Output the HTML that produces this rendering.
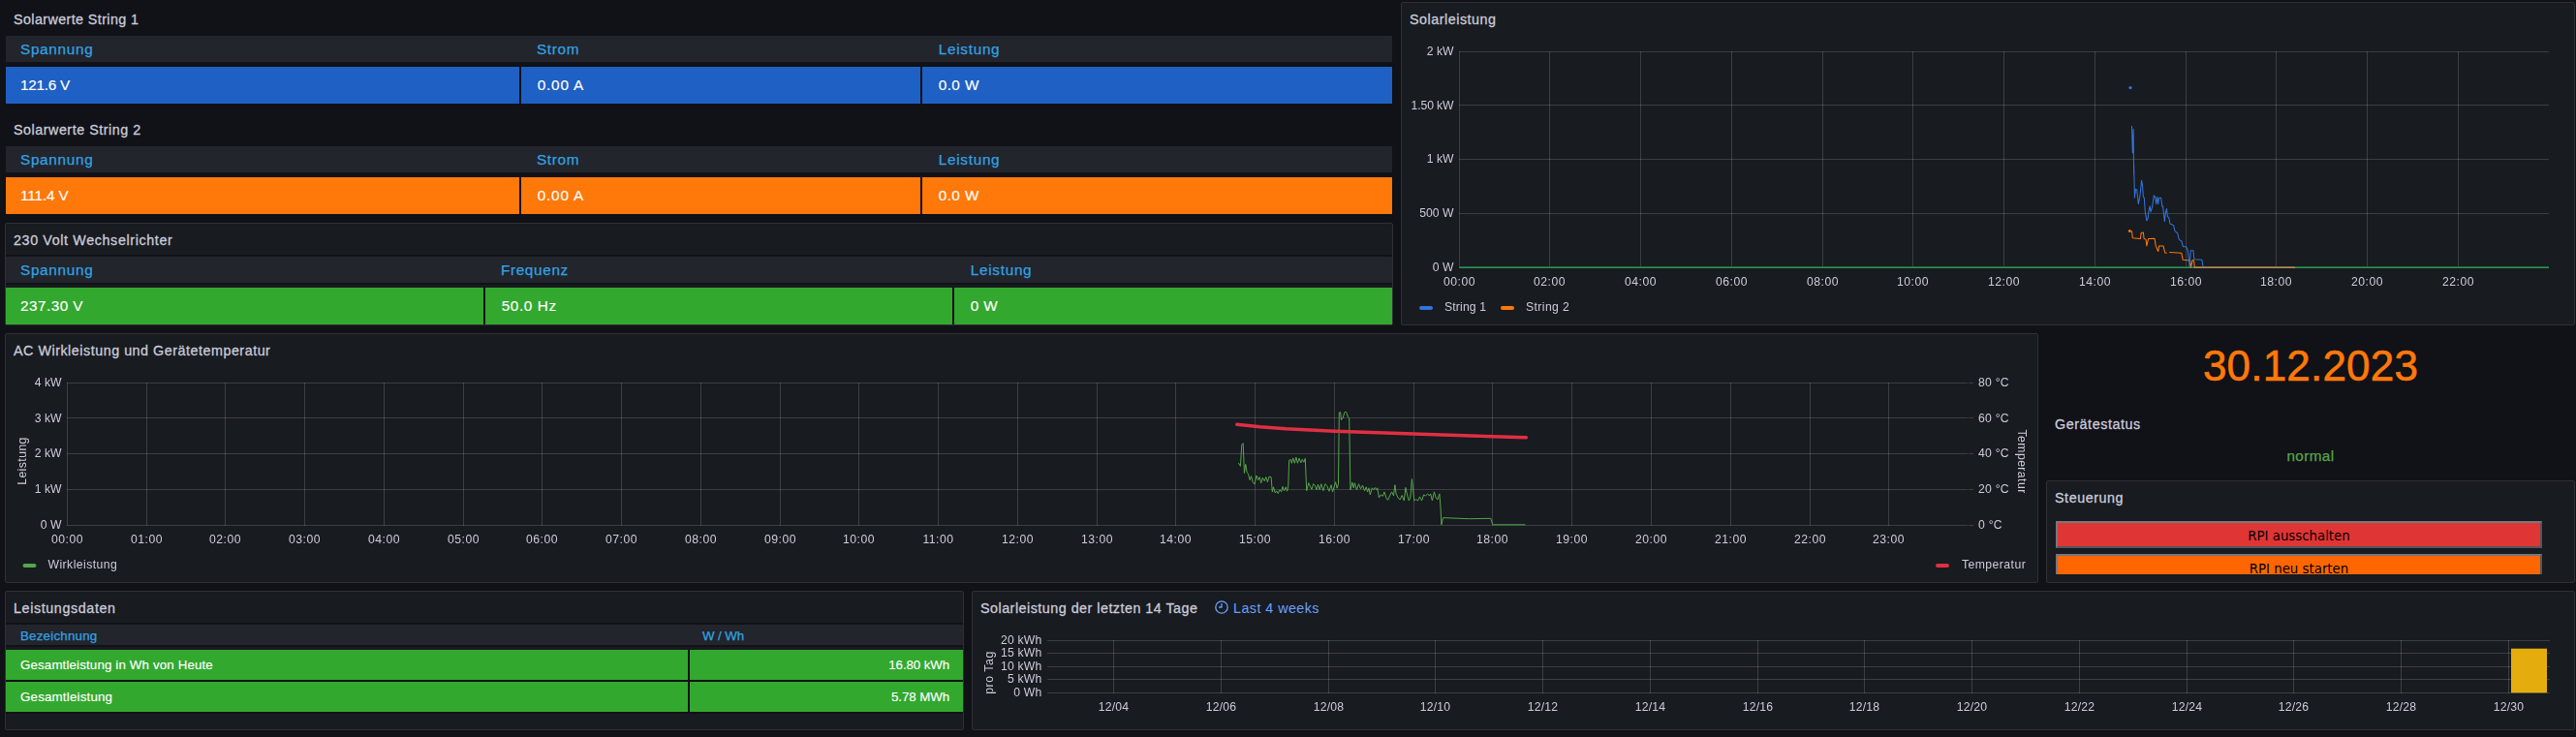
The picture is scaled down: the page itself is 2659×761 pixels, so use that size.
<!DOCTYPE html><html lang="de"><head><meta charset="utf-8"><title>Solar Dashboard</title><style>
html,body{margin:0;padding:0;}
body{width:2659px;height:761px;background:#111217;position:relative;overflow:hidden;
 font-family:"Liberation Sans",sans-serif;color:#ccccdc;font-size:14px;}
.panel{position:absolute;box-sizing:border-box;border:1px solid #2e3036;background:#181b1f;border-radius:2px;}
.panel.tr{border-color:transparent;background:transparent;}
.title{position:absolute;left:8px;top:8px;height:18px;line-height:18px;font-size:14.3px;white-space:nowrap;
 color:#ccccdc;-webkit-text-stroke:.28px #ccccdc;}
.th{position:absolute;box-sizing:border-box;background:#22252b;box-shadow:0 -2px 0 #111217,0 2px 0 #111217;color:#33a2e5;white-space:nowrap;-webkit-text-stroke:.25px #33a2e5;}
.th span,.td span{position:absolute;white-space:nowrap;}
.td{position:absolute;box-sizing:border-box;color:#fff;white-space:nowrap;-webkit-text-stroke:.15px #fff;}
.rowbg{position:absolute;background:#111217;}
.big .th{height:27px;font-size:15.3px;}
.big .th span{top:4px;line-height:20px;}
.big .td{height:38px;font-size:15.3px;}
.big .td span{left:15px;top:9px;line-height:20px;}
.sm .th{height:21px;font-size:13.3px;}
.sm .th span{left:15px;top:2px;line-height:20px;}
.sm .td{height:31px;font-size:13.3px;}
.sm .td span{left:15px;top:6px;line-height:20px;}
.sm .td span.r{left:auto;right:14px;}
svg{position:absolute;left:0;top:0;overflow:visible;}
svg.charts{will-change:transform;}
svg text{font-family:"Liberation Sans",sans-serif;font-size:12.2px;fill:#ccccdc;}
.btn{position:absolute;box-sizing:border-box;border:2px solid;border-color:#77777f #55555c #55555c #77777f;
 font-family:"DejaVu Sans",sans-serif;font-size:13.33px;color:#000;text-align:center;white-space:nowrap;}
</style></head><body>
<div class="panel tr" style="left:5px;top:2px;width:1433px;height:106px"><div class="title"><span style="letter-spacing:0.41px;">Solarwerte String 1</span></div><div class="big"><div class="th" style="left:0;top:34px;width:1431px"><span style="letter-spacing:0.70px;left:15px;">Spannung</span><span style="letter-spacing:0.68px;left:547.9px;">Strom</span><span style="letter-spacing:0.71px;left:962.8px;">Leistung</span></div><div class="rowbg" style="left:0;top:66px;width:1431px;height:38px"></div><div class="td" style="left:0px;top:66px;width:530px;background:#1f60c4"><span style="letter-spacing:-0.25px;left:15px;">121.6 V</span></div><div class="td" style="left:532px;top:66px;width:412px;background:#1f60c4"><span style="letter-spacing:0.81px;left:16.7px;">0.00 A</span></div><div class="td" style="left:946px;top:66px;width:485px;background:#1f60c4"><span style="letter-spacing:0.45px;left:16.7px;">0.0 W</span></div></div></div>
<div class="panel tr" style="left:5px;top:116px;width:1433px;height:106px"><div class="title"><span style="letter-spacing:0.53px;">Solarwerte String 2</span></div><div class="big"><div class="th" style="left:0;top:34px;width:1431px"><span style="letter-spacing:0.70px;left:15px;">Spannung</span><span style="letter-spacing:0.68px;left:547.9px;">Strom</span><span style="letter-spacing:0.71px;left:962.8px;">Leistung</span></div><div class="rowbg" style="left:0;top:66px;width:1431px;height:38px"></div><div class="td" style="left:0px;top:66px;width:530px;background:#ff780a"><span style="letter-spacing:-0.12px;left:15px;">111.4 V</span></div><div class="td" style="left:532px;top:66px;width:412px;background:#ff780a"><span style="letter-spacing:0.81px;left:16.7px;">0.00 A</span></div><div class="td" style="left:946px;top:66px;width:485px;background:#ff780a"><span style="letter-spacing:0.45px;left:16.7px;">0.0 W</span></div></div></div>
<div class="panel" style="left:5px;top:230px;width:1433px;height:106px"><div class="title"><span style="letter-spacing:0.63px;">230 Volt Wechselrichter</span></div><div class="big"><div class="th" style="left:0;top:34px;width:1431px"><span style="letter-spacing:0.70px;left:15px;">Spannung</span><span style="letter-spacing:0.67px;left:510.9px;">Frequenz</span><span style="letter-spacing:0.71px;left:995.8px;">Leistung</span></div><div class="rowbg" style="left:0;top:66px;width:1431px;height:38px"></div><div class="td" style="left:0px;top:66px;width:493px;background:#33a82f"><span style="letter-spacing:0.47px;left:15px;">237.30 V</span></div><div class="td" style="left:495px;top:66px;width:482px;background:#33a82f"><span style="letter-spacing:0.63px;left:16.7px;">50.0 Hz</span></div><div class="td" style="left:979px;top:66px;width:452px;background:#33a82f"><span style="letter-spacing:0.38px;left:16.7px;">0 W</span></div></div></div>
<div class="panel" style="left:1446px;top:2px;width:1212px;height:334px"><div class="title"><span style="letter-spacing:0.53px;">Solarleistung</span></div></div>
<div class="panel" style="left:5px;top:344px;width:2099px;height:258px"><div class="title"><span style="letter-spacing:0.53px;">AC Wirkleistung und Gerätetemperatur</span></div></div>
<div class="panel tr" style="left:2112px;top:344px;width:546px;height:68px"><div style="position:absolute;left:0;top:8px;width:544px;text-align:center;font-size:44px;letter-spacing:.2px;line-height:50px;color:#ff780a;-webkit-text-stroke:.6px #ff780a;white-space:nowrap">30.12.2023</div></div>
<div class="panel tr" style="left:2112px;top:420px;width:546px;height:68px"><div class="title"><span style="letter-spacing:0.58px;">Gerätestatus</span></div><div style="position:absolute;left:0;top:40px;width:544px;text-align:center;font-size:15.3px;letter-spacing:.39px;line-height:20px;color:#56a64b;-webkit-text-stroke:.25px #56a64b;white-space:nowrap">normal</div></div>
<div class="panel" style="left:2112px;top:496px;width:546px;height:106px"><div class="title"><span style="letter-spacing:0.56px;">Steuerung</span></div><div style="position:absolute;left:8px;top:40px;width:528px;height:56px;overflow:hidden"><div class="btn" style="left:1px;top:1px;width:502px;height:28px;background:#e03535;line-height:28.6px">RPI ausschalten</div><div class="btn" style="left:1px;top:35px;width:502px;height:28px;background:#ff6600;line-height:28.6px">RPI neu starten</div></div></div>
<div class="panel" style="left:5px;top:610px;width:990px;height:144px"><div class="title"><span style="letter-spacing:0.62px;">Leistungsdaten</span></div><div class="sm"><div class="th" style="left:0;top:34px;width:988px"><span style="letter-spacing:0.23px;">Bezeichnung</span><span style="letter-spacing:-0.07px;left:719px;">W / Wh</span></div><div class="rowbg" style="left:0;top:60px;width:988px;height:33px"></div><div class="td" style="left:0;top:60px;width:704px;background:#33a82f"><span style="letter-spacing:0.15px;">Gesamtleistung in Wh von Heute</span></div><div class="td" style="left:706px;top:60px;width:282px;background:#33a82f"><span style="letter-spacing:-0.10px;left:auto;right:14px;">16.80 kWh</span></div><div class="rowbg" style="left:0;top:93px;width:988px;height:33px"></div><div class="td" style="left:0;top:93px;width:704px;background:#33a82f"><span style="letter-spacing:0.20px;">Gesamtleistung</span></div><div class="td" style="left:706px;top:93px;width:282px;background:#33a82f"><span style="letter-spacing:-0.08px;left:auto;right:14px;">5.78 MWh</span></div></div></div>
<div class="panel" style="left:1003px;top:610px;width:1655px;height:144px"><div class="title"><span style="letter-spacing:0.50px;">Solarleistung der letzten 14 Tage</span></div><svg width="16" height="16" viewBox="0 0 16 16" style="left:249px;top:8px"><circle cx="8" cy="8" r="6.2" fill="none" stroke="#6e9fff" stroke-width="1.3"/><path d="M8 4.6V8H5.6" fill="none" stroke="#6e9fff" stroke-width="1.3" stroke-linecap="round" stroke-linejoin="round"/></svg><div style="position:absolute;left:269px;top:8px;line-height:18px;font-size:14.3px;letter-spacing:.46px;color:#6e9fff;white-space:nowrap">Last 4 weeks</div></div>
<svg class="charts" width="2659" height="761" viewBox="0 0 2659 761"><line x1="1506" y1="53.5" x2="2631" y2="53.5" stroke="rgba(240,245,255,0.17)" stroke-width="1"/><line x1="1506" y1="108.5" x2="2631" y2="108.5" stroke="rgba(240,245,255,0.17)" stroke-width="1"/><line x1="1506" y1="164.5" x2="2631" y2="164.5" stroke="rgba(240,245,255,0.17)" stroke-width="1"/><line x1="1506" y1="220.5" x2="2631" y2="220.5" stroke="rgba(240,245,255,0.17)" stroke-width="1"/><line x1="1506" y1="276.5" x2="2631" y2="276.5" stroke="rgba(240,245,255,0.17)" stroke-width="1"/><line x1="1506.5" y1="53" x2="1506.5" y2="276" stroke="rgba(240,245,255,0.17)" stroke-width="1"/><text x="1506.5" y="295.2" text-anchor="middle" letter-spacing="0.5">00:00</text><line x1="1599.5" y1="53" x2="1599.5" y2="276" stroke="rgba(240,245,255,0.17)" stroke-width="1"/><text x="1599.5" y="295.2" text-anchor="middle" letter-spacing="0.5">02:00</text><line x1="1693.5" y1="53" x2="1693.5" y2="276" stroke="rgba(240,245,255,0.17)" stroke-width="1"/><text x="1693.5" y="295.2" text-anchor="middle" letter-spacing="0.5">04:00</text><line x1="1787.5" y1="53" x2="1787.5" y2="276" stroke="rgba(240,245,255,0.17)" stroke-width="1"/><text x="1787.5" y="295.2" text-anchor="middle" letter-spacing="0.5">06:00</text><line x1="1881.5" y1="53" x2="1881.5" y2="276" stroke="rgba(240,245,255,0.17)" stroke-width="1"/><text x="1881.5" y="295.2" text-anchor="middle" letter-spacing="0.5">08:00</text><line x1="1974.5" y1="53" x2="1974.5" y2="276" stroke="rgba(240,245,255,0.17)" stroke-width="1"/><text x="1974.5" y="295.2" text-anchor="middle" letter-spacing="0.5">10:00</text><line x1="2068.5" y1="53" x2="2068.5" y2="276" stroke="rgba(240,245,255,0.17)" stroke-width="1"/><text x="2068.5" y="295.2" text-anchor="middle" letter-spacing="0.5">12:00</text><line x1="2162.5" y1="53" x2="2162.5" y2="276" stroke="rgba(240,245,255,0.17)" stroke-width="1"/><text x="2162.5" y="295.2" text-anchor="middle" letter-spacing="0.5">14:00</text><line x1="2256.5" y1="53" x2="2256.5" y2="276" stroke="rgba(240,245,255,0.17)" stroke-width="1"/><text x="2256.5" y="295.2" text-anchor="middle" letter-spacing="0.5">16:00</text><line x1="2349.5" y1="53" x2="2349.5" y2="276" stroke="rgba(240,245,255,0.17)" stroke-width="1"/><text x="2349.5" y="295.2" text-anchor="middle" letter-spacing="0.5">18:00</text><line x1="2443.5" y1="53" x2="2443.5" y2="276" stroke="rgba(240,245,255,0.17)" stroke-width="1"/><text x="2443.5" y="295.2" text-anchor="middle" letter-spacing="0.5">20:00</text><line x1="2537.5" y1="53" x2="2537.5" y2="276" stroke="rgba(240,245,255,0.17)" stroke-width="1"/><text x="2537.5" y="295.2" text-anchor="middle" letter-spacing="0.5">22:00</text><text x="1500.5" y="56.8" text-anchor="end">2 kW</text><text x="1500.5" y="112.5" text-anchor="end" letter-spacing="-0.1">1.50 kW</text><text x="1500.5" y="168.3" text-anchor="end">1 kW</text><text x="1500.5" y="224.1" text-anchor="end">500 W</text><text x="1500.5" y="279.8" text-anchor="end">0 W</text><rect x="1506" y="275" width="1125" height="1" fill="#10743a"/><rect x="1506" y="276" width="1125" height="1" fill="#388a5c"/><rect x="2265" y="275" width="104" height="1" fill="#73784f"/><rect x="2265" y="276" width="104" height="1" fill="#c48046"/><polyline points="2200.5,238.4 2201.3,245.7 2209.4,246.5 2210.2,240.4 2212.4,240.0 2213.0,246.2 2215.1,247.4 2215.9,253.9 2217.6,246.5 2224.1,246.2 2225.2,253.9 2227.7,259.6 2228.6,253.9 2233.0,253.9 2234.7,260.9 2236.8,261.2" fill="none" stroke="#ff780a" stroke-width="1.05" stroke-linejoin="round"/><polyline points="2239.2,260.4 2251.8,261.2 2253.1,268.2 2260.7,269.0 2261.5,275.9 2263.2,268.5 2264.5,269.0 2265.3,275.9" fill="none" stroke="#ff780a" stroke-width="1.05" stroke-linejoin="round"/><polyline points="2200.5,130.0 2201.3,157.7 2202.1,133.3 2202.6,180.0 2202.6,170.0 2203.2,194.4 2203.4,204.2 2204.5,195.2 2205.8,196.1 2207.3,210.7 2208.9,202.6 2210.6,186.3 2211.5,191.2 2212.4,203.4 2213.3,204.2 2214.3,218.9 2215.9,227.8 2217.1,225.4 2218.1,217.2 2219.2,212.7 2220.0,218.9 2221.6,214.0 2223.3,201.8 2224.6,203.4 2225.7,210.7 2226.7,203.4 2227.7,210.7 2228.6,204.2 2230.6,204.2 2231.9,213.2 2232.6,212.7 2234.3,228.6 2235.5,218.9 2236.5,215.6 2237.4,223.7 2238.7,224.6 2240.0,231.1 2243.6,232.7 2244.9,238.4 2247.7,240.8 2249.3,247.4 2251.8,249.0 2253.4,254.7 2256.7,254.7 2258.3,258.8 2259.6,269.3 2260.2,275.9 2261.2,258.8 2264.0,258.8 2264.8,267.7 2272.9,268.2 2274.1,275.9" fill="none" stroke="#3274d9" stroke-width="1.05" stroke-linejoin="round"/><circle cx="2199" cy="90.6" r="1.7" fill="#3274d9"/><circle cx="2198.4" cy="238.4" r="1.5" fill="#ff780a"/><rect x="1465" y="316" width="14" height="4" rx="2" fill="#3274d9"/><text x="1491" y="320.6" text-anchor="start" letter-spacing="0.15">String 1</text><rect x="1549" y="316" width="14" height="4" rx="2" fill="#ff780a"/><text x="1575" y="320.6" text-anchor="start" letter-spacing="0.41">String 2</text><line x1="69" y1="395.5" x2="2031" y2="395.5" stroke="rgba(240,245,255,0.17)" stroke-width="1"/><line x1="2032" y1="395.5" x2="2037" y2="395.5" stroke="rgba(240,245,255,0.17)" stroke-width="1"/><line x1="69" y1="431.5" x2="2031" y2="431.5" stroke="rgba(240,245,255,0.17)" stroke-width="1"/><line x1="2032" y1="431.5" x2="2037" y2="431.5" stroke="rgba(240,245,255,0.17)" stroke-width="1"/><line x1="69" y1="468.5" x2="2031" y2="468.5" stroke="rgba(240,245,255,0.17)" stroke-width="1"/><line x1="2032" y1="468.5" x2="2037" y2="468.5" stroke="rgba(240,245,255,0.17)" stroke-width="1"/><line x1="69" y1="505.5" x2="2031" y2="505.5" stroke="rgba(240,245,255,0.17)" stroke-width="1"/><line x1="2032" y1="505.5" x2="2037" y2="505.5" stroke="rgba(240,245,255,0.17)" stroke-width="1"/><line x1="69" y1="542.5" x2="2031" y2="542.5" stroke="rgba(240,245,255,0.17)" stroke-width="1"/><line x1="2032" y1="542.5" x2="2037" y2="542.5" stroke="rgba(240,245,255,0.17)" stroke-width="1"/><line x1="69.5" y1="395" x2="69.5" y2="543" stroke="rgba(240,245,255,0.17)" stroke-width="1"/><text x="69.5" y="561.2" text-anchor="middle" letter-spacing="0.5">00:00</text><line x1="151.5" y1="395" x2="151.5" y2="543" stroke="rgba(240,245,255,0.17)" stroke-width="1"/><text x="151.5" y="561.2" text-anchor="middle" letter-spacing="0.5">01:00</text><line x1="232.5" y1="395" x2="232.5" y2="543" stroke="rgba(240,245,255,0.17)" stroke-width="1"/><text x="232.5" y="561.2" text-anchor="middle" letter-spacing="0.5">02:00</text><line x1="314.5" y1="395" x2="314.5" y2="543" stroke="rgba(240,245,255,0.17)" stroke-width="1"/><text x="314.5" y="561.2" text-anchor="middle" letter-spacing="0.5">03:00</text><line x1="396.5" y1="395" x2="396.5" y2="543" stroke="rgba(240,245,255,0.17)" stroke-width="1"/><text x="396.5" y="561.2" text-anchor="middle" letter-spacing="0.5">04:00</text><line x1="478.5" y1="395" x2="478.5" y2="543" stroke="rgba(240,245,255,0.17)" stroke-width="1"/><text x="478.5" y="561.2" text-anchor="middle" letter-spacing="0.5">05:00</text><line x1="559.5" y1="395" x2="559.5" y2="543" stroke="rgba(240,245,255,0.17)" stroke-width="1"/><text x="559.5" y="561.2" text-anchor="middle" letter-spacing="0.5">06:00</text><line x1="641.5" y1="395" x2="641.5" y2="543" stroke="rgba(240,245,255,0.17)" stroke-width="1"/><text x="641.5" y="561.2" text-anchor="middle" letter-spacing="0.5">07:00</text><line x1="723.5" y1="395" x2="723.5" y2="543" stroke="rgba(240,245,255,0.17)" stroke-width="1"/><text x="723.5" y="561.2" text-anchor="middle" letter-spacing="0.5">08:00</text><line x1="805.5" y1="395" x2="805.5" y2="543" stroke="rgba(240,245,255,0.17)" stroke-width="1"/><text x="805.5" y="561.2" text-anchor="middle" letter-spacing="0.5">09:00</text><line x1="886.5" y1="395" x2="886.5" y2="543" stroke="rgba(240,245,255,0.17)" stroke-width="1"/><text x="886.5" y="561.2" text-anchor="middle" letter-spacing="0.5">10:00</text><line x1="968.5" y1="395" x2="968.5" y2="543" stroke="rgba(240,245,255,0.17)" stroke-width="1"/><text x="968.5" y="561.2" text-anchor="middle" letter-spacing="0.5">11:00</text><line x1="1050.5" y1="395" x2="1050.5" y2="543" stroke="rgba(240,245,255,0.17)" stroke-width="1"/><text x="1050.5" y="561.2" text-anchor="middle" letter-spacing="0.5">12:00</text><line x1="1132.5" y1="395" x2="1132.5" y2="543" stroke="rgba(240,245,255,0.17)" stroke-width="1"/><text x="1132.5" y="561.2" text-anchor="middle" letter-spacing="0.5">13:00</text><line x1="1213.5" y1="395" x2="1213.5" y2="543" stroke="rgba(240,245,255,0.17)" stroke-width="1"/><text x="1213.5" y="561.2" text-anchor="middle" letter-spacing="0.5">14:00</text><line x1="1295.5" y1="395" x2="1295.5" y2="543" stroke="rgba(240,245,255,0.17)" stroke-width="1"/><text x="1295.5" y="561.2" text-anchor="middle" letter-spacing="0.5">15:00</text><line x1="1377.5" y1="395" x2="1377.5" y2="543" stroke="rgba(240,245,255,0.17)" stroke-width="1"/><text x="1377.5" y="561.2" text-anchor="middle" letter-spacing="0.5">16:00</text><line x1="1459.5" y1="395" x2="1459.5" y2="543" stroke="rgba(240,245,255,0.17)" stroke-width="1"/><text x="1459.5" y="561.2" text-anchor="middle" letter-spacing="0.5">17:00</text><line x1="1540.5" y1="395" x2="1540.5" y2="543" stroke="rgba(240,245,255,0.17)" stroke-width="1"/><text x="1540.5" y="561.2" text-anchor="middle" letter-spacing="0.5">18:00</text><line x1="1622.5" y1="395" x2="1622.5" y2="543" stroke="rgba(240,245,255,0.17)" stroke-width="1"/><text x="1622.5" y="561.2" text-anchor="middle" letter-spacing="0.5">19:00</text><line x1="1704.5" y1="395" x2="1704.5" y2="543" stroke="rgba(240,245,255,0.17)" stroke-width="1"/><text x="1704.5" y="561.2" text-anchor="middle" letter-spacing="0.5">20:00</text><line x1="1786.5" y1="395" x2="1786.5" y2="543" stroke="rgba(240,245,255,0.17)" stroke-width="1"/><text x="1786.5" y="561.2" text-anchor="middle" letter-spacing="0.5">21:00</text><line x1="1868.5" y1="395" x2="1868.5" y2="543" stroke="rgba(240,245,255,0.17)" stroke-width="1"/><text x="1868.5" y="561.2" text-anchor="middle" letter-spacing="0.5">22:00</text><line x1="1949.5" y1="395" x2="1949.5" y2="543" stroke="rgba(240,245,255,0.17)" stroke-width="1"/><text x="1949.5" y="561.2" text-anchor="middle" letter-spacing="0.5">23:00</text><text x="63.5" y="398.9" text-anchor="end">4 kW</text><text x="63.5" y="435.6" text-anchor="end">3 kW</text><text x="63.5" y="472.4" text-anchor="end">2 kW</text><text x="63.5" y="509.1" text-anchor="end">1 kW</text><text x="63.5" y="545.9" text-anchor="end">0 W</text><text x="2042" y="398.9" text-anchor="start" letter-spacing="0.24">80 °C</text><text x="2042" y="435.6" text-anchor="start" letter-spacing="0.24">60 °C</text><text x="2042" y="472.4" text-anchor="start" letter-spacing="0.24">40 °C</text><text x="2042" y="509.1" text-anchor="start" letter-spacing="0.24">20 °C</text><text x="2042" y="545.9" text-anchor="start" letter-spacing="0.24">0 °C</text><text transform="translate(27.2 476) rotate(-90)" text-anchor="middle" letter-spacing=".45">Leistung</text><text transform="translate(2082.5 476.6) rotate(90)" text-anchor="middle" letter-spacing=".45">Temperatur</text><polyline points="1278.3,477.9 1280.4,481.4 1281.8,459.0 1283.2,457.6 1284.4,488.5 1285.8,479.4 1287.1,487.5 1288.5,489.5 1290.1,495.6 1291.5,491.6 1293.2,497.7 1295.0,500.1 1297.0,491.0 1298.7,495.6 1300.1,492.6 1301.7,498.7 1303.3,493.2 1305.2,496.7 1306.8,492.6 1308.4,497.7 1310.1,492.0 1312.1,492.6 1313.3,507.9 1314.5,502.8 1316.2,508.9 1317.6,506.8 1319.2,509.5 1321.1,505.8 1322.7,507.9 1323.9,502.4 1325.5,506.8 1327.2,502.8 1328.6,507.2 1329.8,501.8 1330.6,475.3 1332.0,474.3 1333.3,478.3 1334.7,472.9 1336.3,478.3 1337.9,472.2 1339.4,478.3 1341.0,473.3 1342.8,477.9 1344.2,474.3 1345.9,477.3 1347.3,473.3 1348.7,506.8 1350.8,498.7 1352.6,502.8 1354.0,505.4 1355.6,499.7 1357.3,501.1 1358.9,505.8 1360.5,500.1 1362.2,505.8 1363.8,499.7 1365.8,506.8 1367.9,499.7 1369.9,501.8 1371.9,507.2 1374.0,500.7 1375.6,507.9 1377.0,502.8 1378.6,497.7 1380.1,504.2 1381.5,499.7 1382.3,426.0 1383.5,425.4 1384.5,433.6 1386.2,431.5 1387.8,426.0 1389.0,425.0 1390.2,426.5 1391.3,430.5 1392.7,431.5 1393.9,505.8 1395.9,498.1 1397.2,503.8 1398.4,498.7 1400.4,505.8 1402.5,499.7 1404.5,504.8 1406.5,501.1 1408.6,506.8 1410.2,502.8 1411.6,507.9 1413.0,503.8 1414.3,510.9 1416.3,503.8 1417.7,505.8 1419.3,503.4 1420.8,505.8 1421.8,503.8 1423.4,514.0 1425.2,510.9 1427.3,512.3 1428.9,507.9 1430.9,514.0 1432.6,516.4 1435.0,510.9 1436.6,507.9 1438.5,511.9 1439.9,500.7 1441.1,509.9 1443.2,514.0 1445.2,516.0 1447.2,511.5 1449.3,517.0 1450.9,503.4 1452.3,509.9 1454.3,517.0 1455.8,514.0 1457.4,494.6 1458.4,503.8 1459.8,517.0 1461.5,515.6 1463.5,517.0 1465.5,512.9 1467.6,517.0 1469.6,510.9 1471.6,511.9 1473.7,509.9 1475.3,511.9 1476.7,509.9 1478.4,517.0 1480.4,507.9 1482.2,514.0 1483.9,516.0 1485.9,509.9 1486.9,522.1 1487.9,541.8 1489.5,534.7 1492.0,534.7 1516.4,535.7 1538.8,535.3 1540.8,541.8 1574.4,541.8" fill="none" stroke="#56a64b" stroke-width="1.0" stroke-linejoin="round"/><polyline points="1276.7,438.3 1300.7,440.7 1327.2,442.7 1377.6,445.2 1422.8,446.8 1458.8,448.0 1504.2,449.5 1540.8,450.7 1575.4,451.7" fill="none" stroke="#e02f44" stroke-width="3.4" stroke-linejoin="round" stroke-linecap="round"/><rect x="23.5" y="582" width="14" height="4" rx="2" fill="#56a64b"/><text x="49.5" y="586.8" text-anchor="start" letter-spacing="0.45">Wirkleistung</text><rect x="1998" y="582" width="14" height="4" rx="2" fill="#e02f44"/><text x="2025" y="586.8" text-anchor="start" letter-spacing="0.45">Temperatur</text><line x1="1081" y1="661.5" x2="2632" y2="661.5" stroke="rgba(240,245,255,0.17)" stroke-width="1"/><line x1="1081" y1="674.5" x2="2632" y2="674.5" stroke="rgba(240,245,255,0.17)" stroke-width="1"/><line x1="1081" y1="688.5" x2="2632" y2="688.5" stroke="rgba(240,245,255,0.17)" stroke-width="1"/><line x1="1081" y1="701.5" x2="2632" y2="701.5" stroke="rgba(240,245,255,0.17)" stroke-width="1"/><line x1="1081" y1="715.5" x2="2632" y2="715.5" stroke="rgba(240,245,255,0.17)" stroke-width="1"/><line x1="1149.5" y1="661" x2="1149.5" y2="716" stroke="rgba(240,245,255,0.17)" stroke-width="1"/><text x="1149.5" y="733.8" text-anchor="middle" letter-spacing="0.18">12/04</text><line x1="1260.5" y1="661" x2="1260.5" y2="716" stroke="rgba(240,245,255,0.17)" stroke-width="1"/><text x="1260.5" y="733.8" text-anchor="middle" letter-spacing="0.18">12/06</text><line x1="1371.5" y1="661" x2="1371.5" y2="716" stroke="rgba(240,245,255,0.17)" stroke-width="1"/><text x="1371.5" y="733.8" text-anchor="middle" letter-spacing="0.18">12/08</text><line x1="1481.5" y1="661" x2="1481.5" y2="716" stroke="rgba(240,245,255,0.17)" stroke-width="1"/><text x="1481.5" y="733.8" text-anchor="middle" letter-spacing="0.18">12/10</text><line x1="1592.5" y1="661" x2="1592.5" y2="716" stroke="rgba(240,245,255,0.17)" stroke-width="1"/><text x="1592.5" y="733.8" text-anchor="middle" letter-spacing="0.18">12/12</text><line x1="1703.5" y1="661" x2="1703.5" y2="716" stroke="rgba(240,245,255,0.17)" stroke-width="1"/><text x="1703.5" y="733.8" text-anchor="middle" letter-spacing="0.18">12/14</text><line x1="1814.5" y1="661" x2="1814.5" y2="716" stroke="rgba(240,245,255,0.17)" stroke-width="1"/><text x="1814.5" y="733.8" text-anchor="middle" letter-spacing="0.18">12/16</text><line x1="1924.5" y1="661" x2="1924.5" y2="716" stroke="rgba(240,245,255,0.17)" stroke-width="1"/><text x="1924.5" y="733.8" text-anchor="middle" letter-spacing="0.18">12/18</text><line x1="2035.5" y1="661" x2="2035.5" y2="716" stroke="rgba(240,245,255,0.17)" stroke-width="1"/><text x="2035.5" y="733.8" text-anchor="middle" letter-spacing="0.18">12/20</text><line x1="2146.5" y1="661" x2="2146.5" y2="716" stroke="rgba(240,245,255,0.17)" stroke-width="1"/><text x="2146.5" y="733.8" text-anchor="middle" letter-spacing="0.18">12/22</text><line x1="2257.5" y1="661" x2="2257.5" y2="716" stroke="rgba(240,245,255,0.17)" stroke-width="1"/><text x="2257.5" y="733.8" text-anchor="middle" letter-spacing="0.18">12/24</text><line x1="2367.5" y1="661" x2="2367.5" y2="716" stroke="rgba(240,245,255,0.17)" stroke-width="1"/><text x="2367.5" y="733.8" text-anchor="middle" letter-spacing="0.18">12/26</text><line x1="2478.5" y1="661" x2="2478.5" y2="716" stroke="rgba(240,245,255,0.17)" stroke-width="1"/><text x="2478.5" y="733.8" text-anchor="middle" letter-spacing="0.18">12/28</text><line x1="2589.5" y1="661" x2="2589.5" y2="716" stroke="rgba(240,245,255,0.17)" stroke-width="1"/><text x="2589.5" y="733.8" text-anchor="middle" letter-spacing="0.18">12/30</text><text x="1075.5" y="664.9" text-anchor="end" letter-spacing="0.19">20 kWh</text><text x="1075.5" y="678.4" text-anchor="end" letter-spacing="0.19">15 kWh</text><text x="1075.5" y="691.9" text-anchor="end" letter-spacing="0.19">10 kWh</text><text x="1075.5" y="705.4" text-anchor="end" letter-spacing="0.19">5 kWh</text><text x="1075.5" y="718.9" text-anchor="end" letter-spacing="0.19">0 Wh</text><text transform="translate(1025 694.5) rotate(-90)" text-anchor="middle" letter-spacing=".6">pro Tag</text><rect x="2592" y="669.7" width="37" height="45.6" fill="#e5ac0e"/></svg>
</body></html>
